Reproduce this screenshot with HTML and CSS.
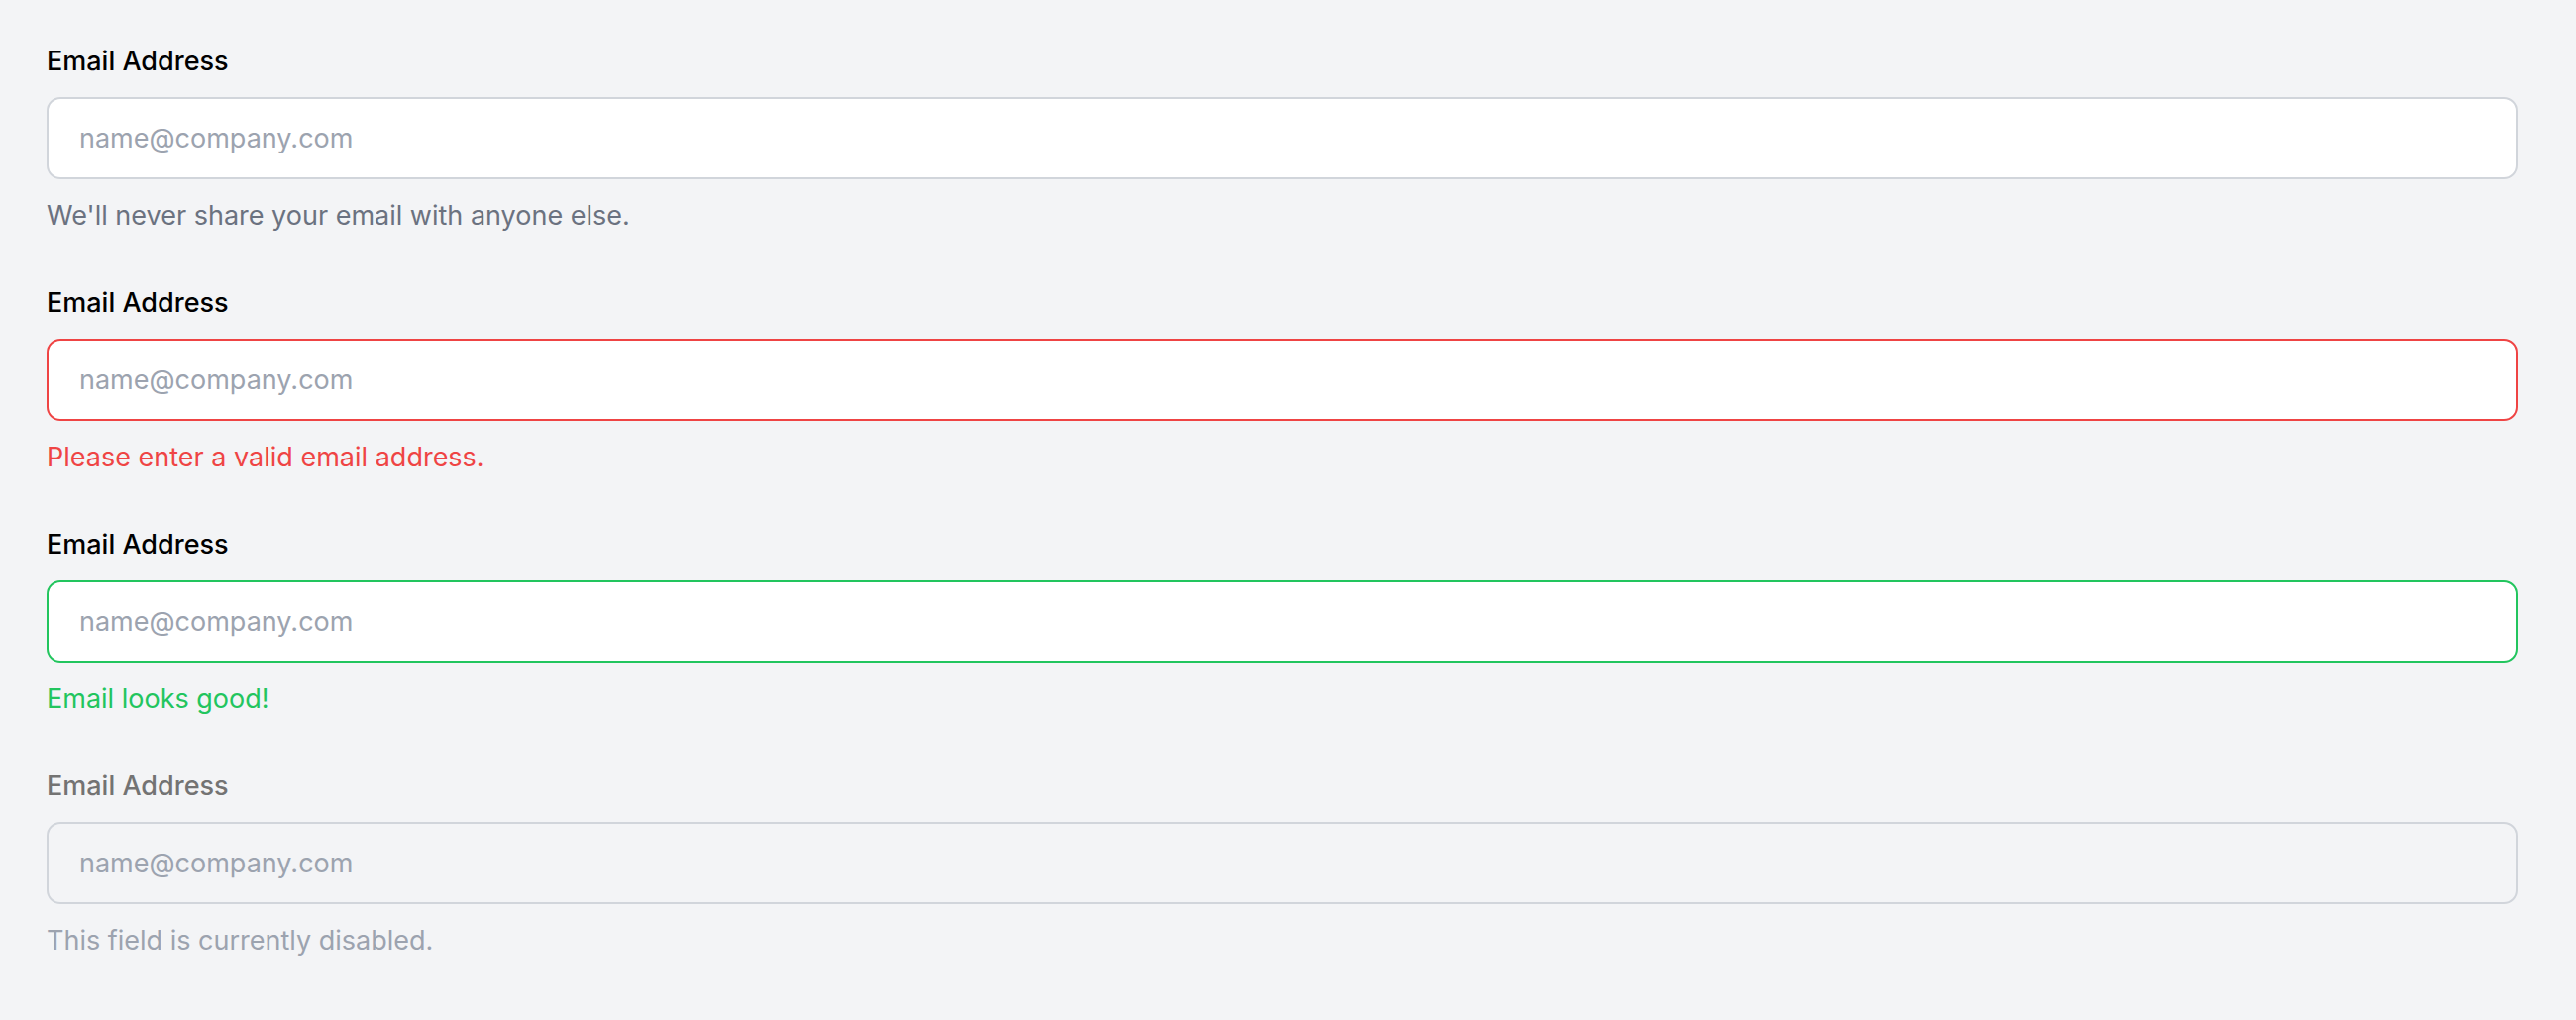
FILE: index.html
```html
<!DOCTYPE html>
<html lang="en">
<head>
    <meta charset="UTF-8">
    <meta name="viewport" content="width=device-width, initial-scale=1.0">
    <title>Email Inputs</title>
    <link rel="stylesheet" href="styles.css">
</head>
<body>
    <div class="form">
        <div class="field">
            <label class="field-label" for="email-default">Email Address</label>
            <input class="field-input" id="email-default" type="email" placeholder="name@company.com">
            <p class="field-help">We'll never share your email with anyone else.</p>
        </div>

        <div class="field field-error">
            <label class="field-label" for="email-error">Email Address</label>
            <input class="field-input" id="email-error" type="email" placeholder="name@company.com">
            <p class="field-help">Please enter a valid email address.</p>
        </div>

        <div class="field field-success">
            <label class="field-label" for="email-success">Email Address</label>
            <input class="field-input" id="email-success" type="email" placeholder="name@company.com">
            <p class="field-help">Email looks good!</p>
        </div>

        <div class="field field-disabled">
            <label class="field-label" for="email-disabled">Email Address</label>
            <input class="field-input" id="email-disabled" type="email" placeholder="name@company.com" disabled>
            <p class="field-help">This field is currently disabled.</p>
        </div>
    </div>
</body>
</html>
```

FILE: styles.css
```css
body {
    font-family: Inter, "Liberation Sans", Arial, sans-serif;
    margin: 0;
    padding: 42px 59px 0 47px;
    background-color: #f3f4f6;
}

.form {
    display: flex;
    flex-direction: column;
    gap: 48px;
}

.field {
    display: flex;
    flex-direction: column;
}

.field-label {
    font-size: 27px;
    line-height: 40px;
    font-weight: 500;
    color: #000;
    margin-bottom: 16px;
}

.field-input {
    box-sizing: border-box;
    width: 100%;
    height: 83px;
    padding: 0 31px;
    font-family: inherit;
    font-size: 27px;
    color: #111827;
    background-color: #fff;
    border: 2px solid #d1d5db;
    border-radius: 14px;
    outline: none;
}

.field-input::placeholder {
    color: #9ca3af;
    opacity: 1;
}

.field-help {
    margin: 17px 0 0;
    font-size: 27px;
    line-height: 40px;
    color: #6b7280;
}

/* states */
.field-error .field-input {
    border-color: #ef4444;
}

.field-error .field-help {
    color: #ef4444;
}

.field-success .field-input {
    border-color: #22c55e;
}

.field-success .field-help {
    color: #22c55e;
}

.field-disabled .field-label {
    color: #737373;
}

.field-disabled .field-input {
    background-color: #f3f4f6;
    cursor: not-allowed;
}

.field-disabled .field-help {
    color: #9ca3af;
}
```
